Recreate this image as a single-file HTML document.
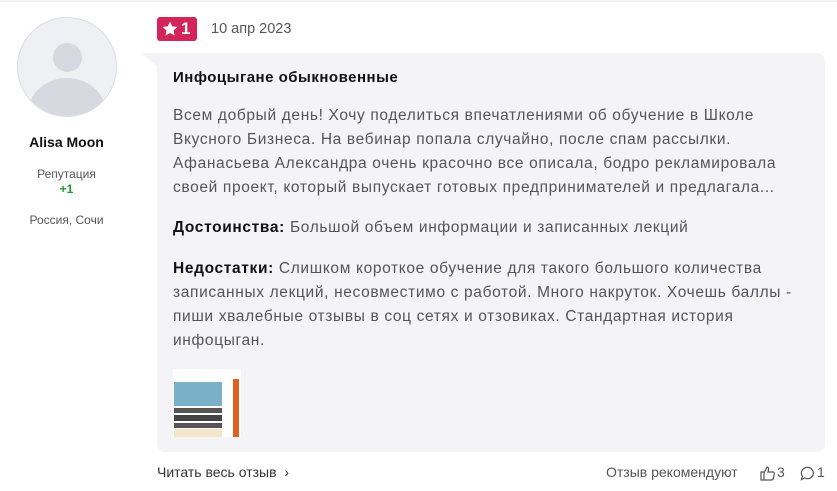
<!DOCTYPE html>
<html><head><meta charset="utf-8"><style>
body{margin:0;width:837px;height:491px;background:#fff;font-family:"Liberation Sans",sans-serif;position:relative;overflow:hidden}
.a{position:absolute}
.ln{position:absolute;left:173px;white-space:nowrap;font-size:15.5px;color:#555;letter-spacing:0.65px}
b{color:#111}
</style></head><body>
<div class="a" style="left:0;top:0;width:837px;height:2px;background:#f2f2f4"></div>
<div class="a" style="left:17px;top:17px;width:98px;height:98px;border-radius:50%;background:#eff0f3;border:1px solid #dcdde1;overflow:hidden">
 <div class="a" style="left:35px;top:25px;width:29px;height:29px;border-radius:50%;background:#d6d9e0"></div>
 <div class="a" style="left:10px;top:60px;width:78px;height:70px;border-radius:50%;background:#d6d9e0"></div>
</div>
<div class="a" style="left:0;width:133px;top:134px;text-align:center;font-size:14px;font-weight:bold;color:#111">Alisa Moon</div>
<div class="a" style="left:0;width:133px;top:167px;text-align:center;font-size:12px;color:#555">Репутация</div>
<div class="a" style="left:0;width:133px;top:182px;text-align:center;font-size:12px;color:#1a9c2a;font-weight:bold">+1</div>
<div class="a" style="left:0;width:133px;top:213px;text-align:center;font-size:12px;color:#555">Россия, Сочи</div>

<div class="a" style="left:157px;top:17px;width:40px;height:24px;background:#d4245c;border-radius:3px;color:#fff;font-weight:bold;font-size:17px;line-height:24px">
 <svg class="a" style="left:5px;top:4px" width="16" height="16" viewBox="0 0 24 24"><path d="M12 1l3.3 7 7.7.9-5.7 5.3 1.5 7.6L12 18l-6.8 3.8 1.5-7.6L1 8.9 8.7 8z" fill="#fff"/></svg>
 <span class="a" style="left:24px">1</span></div>
<div class="a" style="left:211px;top:21px;font-size:14.5px;color:#555">10 апр 2023</div>

<div class="a" style="left:142px;top:53px;width:0;height:0;border-top:14px solid #f4f4f6;border-left:15px solid transparent"></div>
<div class="a" style="left:157px;top:53px;width:668px;height:399px;background:#f4f4f6;border-radius:0 8px 8px 8px"></div>
<div class="ln" style="top:69px;font-weight:bold;color:#111;font-size:15px;letter-spacing:0.5px">Инфоцыгане обыкновенные</div>
<div class="ln" style="top:107px">Всем добрый день! Хочу поделиться впечатлениями об обучение в Школе</div>
<div class="ln" style="top:131px">Вкусного Бизнеса. На вебинар попала случайно, после спам рассылки.</div>
<div class="ln" style="top:155px">Афанасьева Александра очень красочно все описала, бодро рекламировала</div>
<div class="ln" style="top:179px">своей проект, который выпускает готовых предпринимателей и предлагала...</div>
<div class="ln" style="top:219px"><b>Достоинства:</b> Большой объем информации и записанных лекций</div>
<div class="ln" style="top:260px"><b>Недостатки:</b> Слишком короткое обучение для такого большого количества</div>
<div class="ln" style="top:284px">записанных лекций, несовместимо с работой. Много накруток. Хочешь баллы -</div>
<div class="ln" style="top:308px">пиши хвалебные отзывы в соц сетях и отзовиках. Стандартная история</div>
<div class="ln" style="top:332px">инфоцыган.</div>

<div class="a" style="left:173px;top:369px;width:68px;height:68px;background:#fff;overflow:hidden">
 <div class="a" style="left:1px;top:13px;width:48px;height:24px;background:#7ab0c8"></div>
 <div class="a" style="left:1px;top:39px;width:48px;height:5px;background:#555"></div>
 <div class="a" style="left:1px;top:46px;width:48px;height:6px;background:#444"></div>
 <div class="a" style="left:1px;top:54px;width:48px;height:5px;background:#555"></div>
 <div class="a" style="left:1px;top:60px;width:48px;height:8px;background:#f3e6cc"></div>
 <div class="a" style="left:60px;top:10px;width:6px;height:58px;background:#e06020"></div>
</div>

<div class="a" style="left:157px;top:464px;font-size:14px;color:#333">Читать весь отзыв &nbsp;›</div>
<div class="a" style="left:606px;top:464px;font-size:14px;color:#555">Отзыв рекомендуют</div>
<svg class="a" style="left:760px;top:465px" width="16" height="16" viewBox="0 0 16 16" fill="none" stroke="#555" stroke-width="1.2"><path d="M1 7h3v8H1zM4 8l3-6c1 0 2 1 1.5 3L8 7h5c1 0 1.5 1 1.3 2l-1 4.5c-.2 1-1 1.5-2 1.5H4"/></svg>
<div class="a" style="left:777px;top:464px;font-size:14px;color:#555">3</div>
<svg class="a" style="left:800px;top:466px" width="15" height="15" viewBox="0 0 16 16" fill="none" stroke="#555" stroke-width="1.3"><path d="M8 1.5a6.3 6 0 1 1-3 11.3L1.5 14.5l1.2-3.5A6.3 6 0 0 1 8 1.5z"/></svg>
<div class="a" style="left:817px;top:464px;font-size:14px;color:#555">1</div>
</body></html>
